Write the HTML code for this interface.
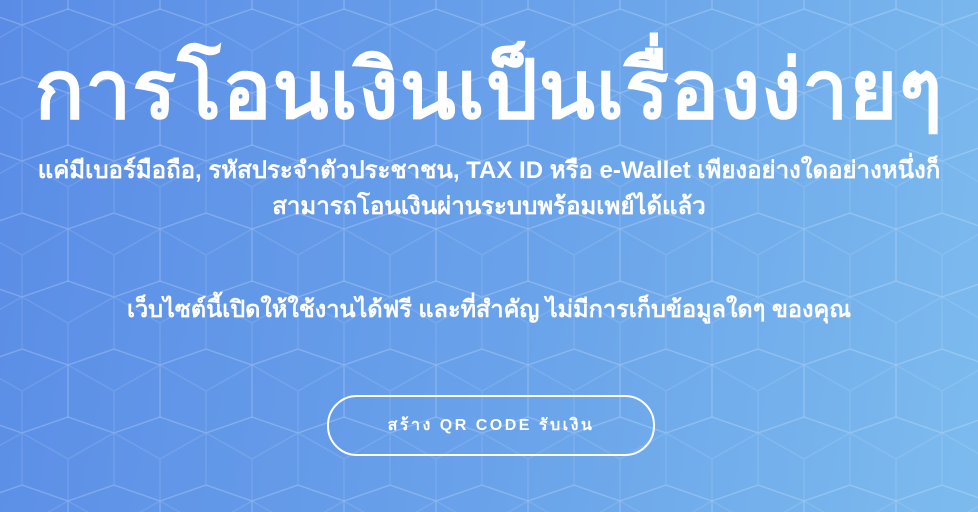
<!DOCTYPE html>
<html><head><meta charset="utf-8">
<style>
html,body{margin:0;padding:0;width:978px;height:512px;overflow:hidden}
body{background:linear-gradient(100deg,#5a8ce6 0%,#6aa3ea 55%,#7cbbee 100%);position:relative;font-family:"Liberation Sans",sans-serif;color:#fff}
svg.bg{position:absolute;left:0;top:0}
.c{position:absolute;left:0;width:978px;text-align:center;white-space:nowrap}
h1{position:absolute;left:0;width:978px;top:36px;margin:0;text-align:center;font-family:"Liberation Serif",serif;font-size:82px;font-weight:bold;line-height:110px;letter-spacing:1px}
.s{font-size:24px;font-weight:bold;line-height:36px}
.btn{position:absolute;left:327px;top:395px;width:324px;height:57px;border:2px solid #fff;border-radius:30px;text-align:center;line-height:57px;font-size:16px;font-weight:bold;letter-spacing:2.5px}
</style></head><body>
<svg class="bg" width="978" height="512">
<defs><pattern id="p" width="92" height="136" patternUnits="userSpaceOnUse" x="22" y="-17">
<g fill="none" stroke="rgba(255,255,255,0.11)" stroke-width="1.3">
<path d="M46,26 L92,42 L92,94 L46,110 L0,94 L0,42 Z M46,68 L46,110 M46,68 L0,42 M46,68 L92,42"/>
<path d="M0,-42 L46,-26 L46,26 L0,42 L-46,26 L-46,-26 Z M0,0 L0,42 M0,0 L-46,-26 M0,0 L46,-26"/>
<path d="M92,-42 L138,-26 L138,26 L92,42 L46,26 L46,-26 Z M92,0 L92,42 M92,0 L46,-26 M92,0 L138,-26"/>
<path d="M0,94 L46,110 L46,162 L0,178 L-46,162 L-46,110 Z M0,136 L0,178 M0,136 L-46,110 M0,136 L46,110"/>
<path d="M92,94 L138,110 L138,162 L92,178 L46,162 L46,110 Z M92,136 L92,178 M92,136 L46,110 M92,136 L138,110"/>
</g></pattern></defs>
<rect width="978" height="512" fill="url(#p)"/>
</svg>
<h1>การโอนเงินเป็นเรื่องง่ายๆ</h1>
<div class="c s" style="top:153px">แค่มีเบอร์มือถือ, รหัสประจำตัวประชาชน, TAX ID หรือ e-Wallet เพียงอย่างใดอย่างหนึ่งก็</div>
<div class="c s" style="top:189px">สามารถโอนเงินผ่านระบบพร้อมเพย์ได้แล้ว</div>
<div class="c s" style="top:291px;font-size:23.5px">เว็บไซต์นี้เปิดให้ใช้งานได้ฟรี และที่สำคัญ ไม่มีการเก็บข้อมูลใดๆ ของคุณ</div>
<div class="btn">สร้าง QR CODE รับเงิน</div>
</body></html>
